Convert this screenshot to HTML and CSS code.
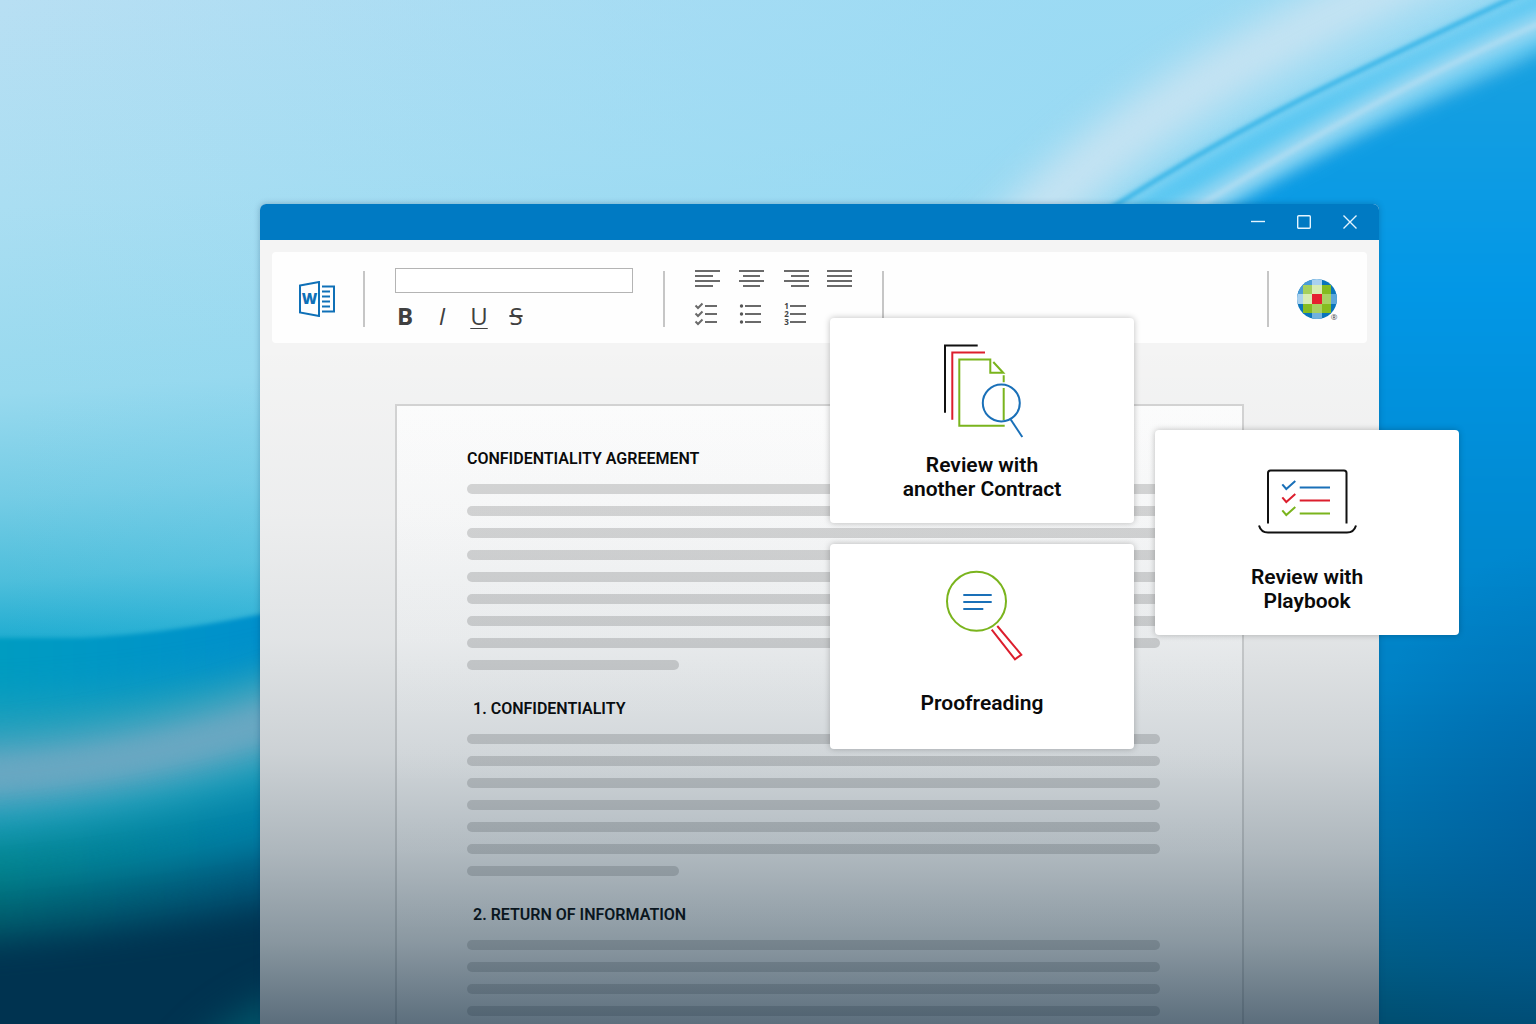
FILE: index.html
```html
<!DOCTYPE html>
<html lang="en">
<head>
    <meta charset="UTF-8">
    <meta name="viewport" content="width=device-width, initial-scale=1.0">
    <title>Confidentiality Agreement</title>
    <link rel="stylesheet" href="styles.css">
</head>
<body>
    <div class="desktop">
        <!-- Wallpaper -->
        <svg class="wallpaper" viewBox="0 0 1536 1024" preserveAspectRatio="none" aria-hidden="true">
            <defs>
                <linearGradient id="sky" x1="0" y1="0" x2="0.12" y2="1">
                    <stop offset="0" stop-color="#b8dff3"/>
                    <stop offset="0.2" stop-color="#aadef2"/>
                    <stop offset="0.38" stop-color="#97d9ee"/>
                    <stop offset="0.48" stop-color="#74cce5"/>
                    <stop offset="0.56" stop-color="#4dbedb"/>
                    <stop offset="0.62" stop-color="#1cabd0"/>
                </linearGradient>
                <linearGradient id="skySide" x1="0" y1="0" x2="1" y2="0">
                    <stop offset="0" stop-color="#94d9f4" stop-opacity="0"/>
                    <stop offset="0.7" stop-color="#94d9f4" stop-opacity="0.75"/>
                </linearGradient>
                <linearGradient id="deep" x1="0" y1="0" x2="0" y2="1">
                    <stop offset="0" stop-color="#1ba2de"/>
                    <stop offset="0.1" stop-color="#119de2"/>
                    <stop offset="0.25" stop-color="#0297e6"/>
                    <stop offset="0.46" stop-color="#008ad2"/>
                    <stop offset="0.62" stop-color="#0081c4"/>
                    <stop offset="0.76" stop-color="#0070a8"/>
                    <stop offset="0.88" stop-color="#005a82"/>
                    <stop offset="1" stop-color="#003c58"/>
                </linearGradient>
                <radialGradient id="corner">
                    <stop offset="0" stop-color="#004a90" stop-opacity="0.45"/>
                    <stop offset="1" stop-color="#004a90" stop-opacity="0"/>
                </radialGradient>
                <linearGradient id="edge" x1="0" y1="0" x2="1" y2="0">
                    <stop offset="0.1" stop-color="#009dc0"/>
                    <stop offset="0.9" stop-color="#0090cc"/>
                </linearGradient>
                <linearGradient id="teal" x1="0" y1="0" x2="1" y2="0">
                    <stop offset="0" stop-color="#04868c"/>
                    <stop offset="1" stop-color="#007fae"/>
                </linearGradient>
                <linearGradient id="dusk" x1="0" y1="0" x2="1" y2="0">
                    <stop offset="0" stop-color="#006670"/>
                    <stop offset="1" stop-color="#00557f"/>
                </linearGradient>
                <filter id="soft" x="-20%" y="-100%" width="140%" height="300%" color-interpolation-filters="sRGB"><feGaussianBlur stdDeviation="2"/></filter>
                <filter id="blur" x="-20%" y="-100%" width="140%" height="300%" color-interpolation-filters="sRGB"><feGaussianBlur stdDeviation="9"/></filter>
                <filter id="haze" x="-20%" y="-100%" width="140%" height="300%" color-interpolation-filters="sRGB"><feGaussianBlur stdDeviation="18"/></filter>
            </defs>
            <rect width="1536" height="1024" fill="url(#sky)"/>
            <rect width="1536" height="1024" fill="url(#skySide)"/>
            <!-- right side: blue field and light streaks -->
            <path d="M960 290L1044 205Q1136 120 1249 58T1470 -50" fill="none" stroke="#c6e3f2" stroke-width="54" filter="url(#haze)"/>
            <path d="M1060 250L1113 215Q1222 140 1342 84T1580 -30V40Q1400 100 1239 215Z" fill="#55c6f2" filter="url(#blur)"/>
            <path d="M1150 250L1239 198Q1342 140 1444 94T1600 20V1100H1150Z" fill="url(#deep)" filter="url(#blur)"/>
            <path d="M1060 242L1113 207Q1222 137 1342 79T1560 -24" fill="none" stroke="#2cb0e6" stroke-width="4" filter="url(#soft)"/>
            <path d="M1130 240L1205 202Q1342 119 1444 68T1600 2" fill="none" stroke="#a4daf2" stroke-width="22" filter="url(#blur)"/>
            <path d="M1130 240L1205 202Q1342 119 1444 68T1600 2" fill="none" stroke="#b8dff2" stroke-width="5" opacity="0.7" filter="url(#soft)"/>
            <ellipse cx="1570" cy="840" rx="220" ry="300" fill="url(#corner)"/>
            <!-- left side: waves -->
            <path d="M-60 638H80Q170 635 300 606V1060H-60Z" fill="url(#edge)" filter="url(#soft)"/>
            <path d="M-60 704Q150 704 340 652V1060H-60Z" fill="#1d9fbc" filter="url(#haze)"/>
            <path d="M-60 776Q130 776 340 698" fill="none" stroke="#6ca8c2" stroke-width="56" filter="url(#haze)"/>
            <path d="M-60 842Q130 832 340 768V1100H-60Z" fill="url(#teal)" filter="url(#haze)"/>
            <path d="M-60 776Q130 776 340 698" fill="none" stroke="#6ca8c2" stroke-width="24" opacity="0.6" filter="url(#blur)"/>
            <path d="M-60 894Q130 884 340 838V1100H-60Z" fill="url(#dusk)" filter="url(#haze)"/>
            <path d="M-60 940Q130 930 340 888V1120H-60Z" fill="#003350" filter="url(#haze)"/>
            <path d="M180 1070Q230 1000 340 975V1070Z" fill="#005468" filter="url(#haze)"/>
        </svg>

        <div class="window">
            <div class="title-bar">
                <button class="window-btn" type="button" aria-label="Minimize">
                    <svg viewBox="0 0 14 14"><path d="M0 6.500H14"/></svg>
                </button>
                <button class="window-btn" type="button" aria-label="Maximize">
                    <svg viewBox="0 0 14 14"><rect x="0.700" y="0.700" width="12.600" height="12.600" rx="1"/></svg>
                </button>
                <button class="window-btn" type="button" aria-label="Close">
                    <svg viewBox="0 0 14 14"><path d="M0.500 0.500L13.500 13.500M13.500 0.500L0.500 13.500"/></svg>
                </button>
            </div>

            <div class="toolbar">
                <svg class="word-icon" viewBox="0 0 36 36" role="img" aria-label="Word">
                    <path d="M1 4.500L20 1V35L1 31.500Z"/>
                    <path d="M23 5.500H35V30.500H23M23 10.500H31M23 15.500H31M23 20.500H31M23 25.500H31"/>
                    <text x="10.500" y="23">W</text>
                </svg>
                <span class="divider"></span>
                <div class="tool-group font-group">
                    <input class="font-name" type="text" aria-label="Font">
                    <div class="font-styles">
                        <button class="style-btn bold" type="button">B</button>
                        <button class="style-btn italic" type="button">I</button>
                        <button class="style-btn underline" type="button">U</button>
                        <button class="style-btn strike" type="button">S</button>
                    </div>
                </div>
                <span class="divider"></span>
                <div class="tool-group paragraph-group">
                    <button class="icon-btn" type="button" aria-label="Align left">
                        <svg viewBox="0 2 25 22"><path d="M0 3H25M0 8H18M0 13H25M0 18H18"/></svg>
                    </button>
                    <button class="icon-btn" type="button" aria-label="Align center">
                        <svg viewBox="0 2 25 22"><path d="M0 3H25M4 8H21M0 13H25M4 18H21"/></svg>
                    </button>
                    <button class="icon-btn" type="button" aria-label="Align right">
                        <svg viewBox="0 2 25 22"><path d="M1 3H26M8 8H26M1 13H26M8 18H26"/></svg>
                    </button>
                    <button class="icon-btn" type="button" aria-label="Justify">
                        <svg viewBox="0 2 25 22"><path d="M0 3H25M0 8H25M0 13H25M0 18H25"/></svg>
                    </button>
                    <button class="icon-btn" type="button" aria-label="Checklist">
                        <svg viewBox="0 2 25 22"><path d="M10 3H22M10 11H22M10 19H22M0.500 2.500L3 5L7.500 0.500M0.500 10.500L3 13L7.500 8.500M0.500 18.500L3 21L7.500 16.500"/></svg>
                    </button>
                    <button class="icon-btn" type="button" aria-label="Bulleted list">
                        <svg viewBox="0 2 25 22"><path d="M6 3H22M6 11H22M6 19H22"/><circle cx="2.500" cy="3" r="1.700"/><circle cx="2.500" cy="11" r="1.700"/><circle cx="2.500" cy="19" r="1.700"/></svg>
                    </button>
                    <button class="icon-btn" type="button" aria-label="Numbered list">
                        <svg viewBox="0 2 25 22"><path d="M7 3H23M7 11H23M7 19H23"/><text x="3.500" y="6">1</text><text x="3.500" y="14">2</text><text x="3.500" y="22">3</text></svg>
                    </button>
                </div>
                <span class="divider"></span>
                <span class="divider divider-end"></span>
                <svg class="globe" viewBox="0 0 40 40" role="img" aria-label="Wolters Kluwer">
                    <clipPath id="disc"><circle cx="20" cy="20" r="20"/></clipPath>
                    <g clip-path="url(#disc)">
                        <rect width="40" height="40" fill="#0a75bb"/>
                        <rect width="20" height="20" fill="#4a9cd6"/>
                        <rect x="6" y="6" width="28" height="28" fill="#85bc20"/>
                        <rect x="6" y="6" width="14" height="14" fill="#a5d05c"/>
                        <rect x="15" width="10" height="6" fill="#a9d1ef"/>
                        <rect y="15" width="6" height="10" fill="#a9d1ef"/>
                        <rect x="15" y="6" width="10" height="9" fill="#d8ecb4"/>
                        <rect x="6" y="15" width="9" height="10" fill="#d8ecb4"/>
                        <rect x="25" y="15" width="9" height="10" fill="#a8d162"/>
                        <rect x="15" y="25" width="10" height="9" fill="#a8d162"/>
                        <rect x="34" y="15" width="6" height="10" fill="#5ba6da"/>
                        <rect x="15" y="34" width="10" height="6" fill="#6fb2de"/>
                        <rect x="15" y="15" width="10" height="10" fill="#e5202e"/>
                    </g>
                    <text x="37" y="41">®</text>
                </svg>
            </div>

            <main class="page">
                <h1>CONFIDENTIALITY AGREEMENT</h1>
                <div class="lines">
                    <span></span><span></span><span></span><span></span><span></span><span></span><span></span><span></span><span class="short"></span>
                </div>
                <h2>1. CONFIDENTIALITY</h2>
                <div class="lines">
                    <span></span><span></span><span></span><span></span><span></span><span></span><span class="short"></span>
                </div>
                <h2>2. RETURN OF INFORMATION</h2>
                <div class="lines">
                    <span></span><span></span><span></span><span></span><span></span>
                </div>
            </main>

            <!-- Floating action cards -->
            <button class="card card-contract" type="button">
                <svg class="card-icon" viewBox="0 0 100 100">
                    <path class="black" d="M45.700 7.500H13V74.700"/>
                    <path class="red" d="M53 14.500H20.300V81.700"/>
                    <path class="green" d="M72.700 87.700H27.300V21.500H58.300V34.700H71.200L61.300 24M71.700 37.300V44.300M71.700 50V82"/>
                    <circle class="blue" cx="69.300" cy="65" r="18.500"/>
                    <path class="blue" d="M78.700 81.500L90.300 99"/>
                </svg>
                <span class="card-title">Review with<br>another Contract</span>
            </button>
            <button class="card card-proofreading" type="button">
                <svg class="card-icon" viewBox="0 0 100 100">
                    <circle class="green" cx="44.500" cy="37.300" r="29.500"/>
                    <path class="blue" d="M31.300 31H59.700M31.300 38H59.700M31.300 45H51.300"/>
                    <path class="red" d="M59.700 65.700L83 95.300L89.300 90.700L65.300 62"/>
                </svg>
                <span class="card-title">Proofreading</span>
            </button>
            <button class="card card-playbook" type="button">
                <svg class="card-icon" viewBox="0 0 100 100">
                    <path class="black" d="M11 73.500V23Q11 20.500 13.500 20.500H87Q89.500 20.500 89.500 23V73.500M2 75.500Q4 82.500 11 82.500H90Q97 82.500 99 75.500"/>
                    <path class="blue" d="M25.300 34.300L29.300 39L38.300 31M42.700 37.500H73"/>
                    <path class="red" d="M25.300 47.300L29.300 52L38.300 44M42.700 50.500H73"/>
                    <path class="green" d="M25.300 60.300L29.300 65L38.300 57M42.700 63.500H73"/>
                </svg>
                <span class="card-title">Review with<br>Playbook</span>
            </button>
        </div>
    </div>
</body>
</html>
```
FILE: styles.css
```css
* {
    box-sizing: border-box;
}
body {
    margin: 0;
    font-family: Roboto, "Noto Sans", sans-serif;
    color: #0a0a0a;
}
button {
    font-family: inherit;
    color: inherit;
    background: none;
    border: none;
    padding: 0;
    cursor: pointer;
}
svg {
    display: block;
}
.desktop {
    position: relative;
    display: flex;
    height: 100vh;
    padding: 204px 157px 0 260px;
    overflow: hidden;
}
.wallpaper {
    position: absolute;
    inset: 0;
    width: 100%;
    height: 100%;
}

/* Window */
.window {
    position: relative;
    flex: 1;
    background-color: #f4f4f4;
    border-radius: 6px 6px 0 0;
    box-shadow: 0 0 6px rgba(0, 50, 90, 0.3);
}
.window::after {
    content: "";
    position: absolute;
    inset: 0;
    background: linear-gradient(rgba(10, 40, 60, 0) 17%, rgba(10, 40, 60, 0.03) 38%, rgba(10, 40, 60, 0.08) 53%, rgba(10, 40, 60, 0.17) 67%, rgba(10, 40, 60, 0.3) 79%, rgba(10, 40, 60, 0.46) 90%, rgba(10, 38, 60, 0.65) 100%);
    pointer-events: none;
}
.title-bar {
    display: flex;
    justify-content: flex-end;
    align-items: center;
    gap: 32px;
    height: 36px;
    padding: 0 22px;
    background-color: #007ac3;
    border-radius: 6px 6px 0 0;
}
.window-btn svg {
    width: 14px;
    height: 14px;
    fill: none;
    stroke: #e4f5ff;
    stroke-width: 1.4;
}

/* Toolbar */
.toolbar {
    display: flex;
    align-items: center;
    gap: 28px;
    margin: 12px;
    padding: 16px 30px 14px 27px;
    background-color: #fefefe;
    border-radius: 4px;
    font-family: "Open Sans", "Noto Sans", sans-serif;
}
.word-icon {
    width: 36px;
    height: 36px;
    fill: none;
    stroke: #0f70b7;
    stroke-width: 2;
}
.word-icon text {
    fill: #0f70b7;
    stroke: none;
    font-size: 15px;
    font-weight: 800;
    text-anchor: middle;
}
.divider {
    width: 2px;
    height: 56px;
    background-color: #c6c6c6;
}
.divider-end {
    margin-left: auto;
}
.tool-group {
    margin: 0 2px;
}
.font-group {
    width: 238px;
}
.font-name {
    display: block;
    width: 100%;
    height: 25px;
    border: 1px solid #b4b4b4;
    background-color: #fff;
}
.font-styles {
    display: flex;
    gap: 17px;
    margin-top: 10px;
}
.style-btn {
    width: 20px;
    height: 26px;
    font-family: inherit;
    font-size: 24px;
    line-height: 26px;
    color: #404040;
}
.bold {
    font-weight: 700;
}
.italic {
    font-style: italic;
}
.underline {
    text-decoration: underline 1px;
    text-underline-offset: 3px;
}
.strike {
    text-decoration: line-through 2px;
}
.paragraph-group {
    display: grid;
    grid-template-columns: repeat(4, 25px);
    gap: 13px 19px;
}
.icon-btn svg {
    width: 25px;
    height: 22px;
    fill: none;
    stroke: #6a6a6a;
    stroke-width: 2;
    overflow: visible;
}
.icon-btn circle {
    fill: #555;
    stroke: none;
}
.icon-btn text {
    fill: #444;
    stroke: none;
    font-size: 8px;
    font-weight: 700;
    text-anchor: middle;
}
.globe {
    width: 40px;
    height: 40px;
    overflow: visible;
}
.globe text {
    font-size: 8px;
    fill: #444;
    text-anchor: middle;
}

/* Document */
.page {
    height: calc(100% - 200px);
    margin: 61px 135px 0;
    padding: 41px 82px 0 70px;
    overflow: hidden;
    border: 2px solid #d4d4d4;
    border-bottom: none;
    background: linear-gradient(#fefefe, rgba(255, 255, 255, 0.5) 60%, rgba(255, 255, 255, 0.2));
}
.page h1, .page h2 {
    margin: 0;
    font-size: 16px;
    line-height: 24px;
    font-weight: 600;
}
.page h2 {
    margin-top: 27px;
    padding-left: 6px;
}
.lines {
    display: flex;
    flex-direction: column;
    gap: 12px;
    margin-top: 13px;
}
.lines span {
    height: 10px;
    border-radius: 5px;
    background-color: rgba(30, 30, 30, 0.17);
}
.lines .short {
    width: 212px;
}

/* Cards */
.card {
    position: absolute;
    z-index: 1;
    display: flex;
    flex-direction: column;
    align-items: center;
    width: 304px;
    height: 205px;
    padding-top: 20px;
    background-color: #fff;
    border-radius: 4px;
    box-shadow: 0 0 6px rgba(0, 0, 0, 0.25);
}
.card-contract {
    left: 570px;
    top: 114px;
}
.card-proofreading {
    left: 570px;
    top: 340px;
}
.card-playbook {
    left: 895px;
    top: 226px;
}
.card-icon {
    width: 100px;
    height: 100px;
    fill: none;
    stroke-width: 2;
}
.card-title {
    display: flex;
    align-items: center;
    min-height: 48px;
    margin-top: 15px;
    font-size: 21px;
    line-height: 24px;
    font-weight: 600;
}
.black {
    stroke: #111;
}
.red {
    stroke: #dc1e2d;
}
.green {
    stroke: #7ab41d;
}
.blue {
    stroke: #1a70b8;
}
```
